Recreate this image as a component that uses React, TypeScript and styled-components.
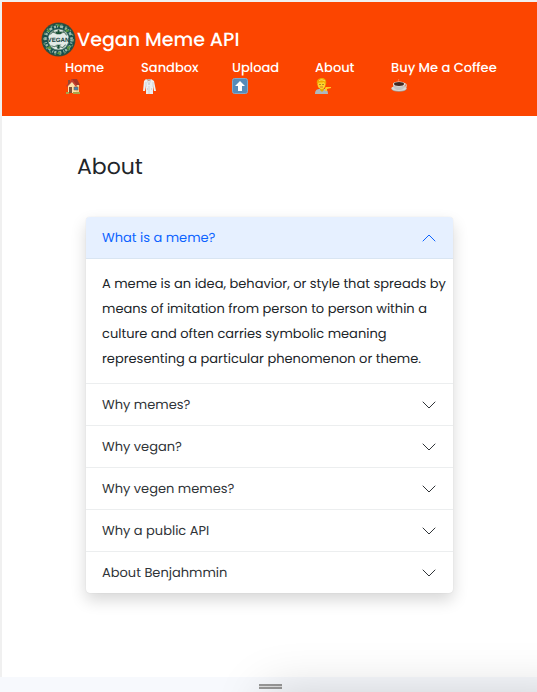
import React, { useState } from "react";
import styled, { createGlobalStyle } from "styled-components";

const GlobalStyle = createGlobalStyle`
  *, *::before, *::after { box-sizing: border-box; }
  body {
    margin: 0;
    background: #fff;
    color: #212529;
    font-family: Poppins, Inter, "Open Sans", sans-serif;
    font-size: 13px;
    text-rendering: geometricPrecision;
  }
`;

const Page = styled.div`
  display: flex;
  flex-direction: column;
  min-height: 100vh;
  overflow: hidden;
`;

const Viewport = styled.div`
  flex: 1;
  border-top: 2px solid #f0f0f0;
  border-left: 2px solid #f0f0f0;
`;

const Header = styled.header`
  padding: 20px 36px 18px 39px;
  background: #fc4500;
  color: #fff;
`;

const Brand = styled.a`
  display: flex;
  align-items: center;
  gap: 1px;
  height: 35px;
  color: inherit;
  font-size: 19px;
  font-weight: 500;
  line-height: 35px;
  text-decoration: none;
`;

const Nav = styled.nav`
  display: grid;
  grid-template-columns: 40px 55px 47px 40px max-content;
  column-gap: 36px;
  padding: 1px 0 0 24px;
  height: 41px;
`;

const NavLink = styled.a`
  display: flex;
  flex-direction: column;
  color: inherit;
  font-weight: 500;
  line-height: 20px;
  text-decoration: none;
  white-space: nowrap;
`;

const Main = styled.main`
  padding: 35px 84px 80px;
`;

const Title = styled.h1`
  margin: 0 0 34px -9px;
  font-size: 22px;
  font-weight: 400;
  line-height: 32px;
`;

const Accordion = styled.div`
  border-radius: 4px;
  background: #fff;
  box-shadow: 0 7px 16px rgba(0, 0, 0, 0.16), 0 0 1px rgba(0, 0, 0, 0.16);
`;

const Item = styled.section`
  border-bottom: 1px solid #eceeef;
  &:last-child { border-bottom: 0; }
`;

const ItemHeading = styled.h2`
  margin: 0;
  font-size: 13px;
  font-weight: 400;
`;

const Toggle = styled.button<{ $open: boolean }>`
  display: flex;
  align-items: center;
  justify-content: space-between;
  width: 100%;
  height: ${(p) => (p.$open ? 42 : 41)}px;
  padding: 0 17px 0 16px;
  border: 0;
  border-radius: ${(p) => (p.$open ? "4px 4px 0 0" : "4px")};
  background: ${(p) => (p.$open ? "#e6f0ff" : "transparent")};
  box-shadow: ${(p) => (p.$open ? "inset 0 -1px #d9e5f2" : "none")};
  color: ${(p) => (p.$open ? "#0c63ff" : "#303438")};
  font: inherit;
  text-align: left;
  text-rendering: inherit;
  cursor: pointer;
  svg { transform: ${(p) => (p.$open ? "rotate(180deg)" : "none")}; }
`;

const Panel = styled.p`
  margin: 0;
  padding: 12px 4px 12px 16px;
  line-height: 25px;
`;

const ResizeBar = styled.footer`
  position: relative;
  display: flex;
  justify-content: center;
  height: 15px;
  padding: 7px 0 0 4px;
  background: #f7f9fd;
  &::after {
    content: "";
    position: absolute;
    top: 18px;
    right: -40px;
    left: 50%;
    height: 60px;
    box-shadow: 0 0 50px 4px rgba(0, 0, 0, 0.17);
    pointer-events: none;
  }
`;

const Grip = styled.span`
  width: 23px;
  height: 5px;
  border: solid #999;
  border-width: 2px 0;
  background: #e0e0e0;
`;

const Logo = () => (
  <svg width="35" height="35" viewBox="0 0 34 34" aria-hidden="true">
    <circle cx="17" cy="17" r="16.5" fill="#3d4e38" />
    <circle cx="17" cy="17" r="15.5" fill="#174f4c" />
    <circle cx="17" cy="17" r="12.7" fill="none" stroke="#9eb8ab" strokeWidth="2.5" strokeDasharray="2 1 1 2 3 2" />
    <circle cx="17" cy="17" r="14.5" fill="none" stroke="#6e9b72" strokeWidth="1" strokeDasharray="2 3" />
    <circle cx="17" cy="17" r="10.5" fill="#5c8478" />
    <circle cx="17" cy="17" r="9.8" fill="#e4ebe6" />
    <path d="M9 12l3-3 2 2 3-3 3 3 2-2 3 4M10 23l3 1 2-1 1 2 3-1 2 1 3-3" fill="none" stroke="#638272" strokeWidth="1" />
    <path d="M14 9l2 1 1-3 1 3 3-1-2 3h-4zM15 22h5l-2 1v3h-2v-3z" fill="#174f35" />
    <text x="17" y="19" textAnchor="middle" fontSize="6" fontWeight="700" fontFamily="Liberation Sans, sans-serif" fill="#153f3b">VEGAN</text>
    <path d="M5 9l3-2 1 3zM24 6l4 3-4 1zM5 25l4-2 1 4zM25 24l4-1-3 5zM15 3l3-1v3zM15 30l4-1-1 3z" fill="#5b963f" />
  </svg>
);

const icons: Record<string, React.ReactNode> = {
  home: (
    <>
      <path d="M3 7h11v8H3z" fill="#f0d39a" />
      <path d="M3 7l4-4 4 4v8H3z" fill="#ffe2aa" />
      <path d="M6 1h6l3 6h-4z" fill="#a73524" />
      <path d="M1 8l6-7 5 7-1 1-4-5-5 5z" fill="#c54030" />
      <path d="M3 2h2v3L3 7z" fill="#8e4b38" />
      <path d="M4 9h3v6H4z" fill="#815039" />
      <path d="M9 9h4v3H9z" fill="#4184b4" stroke="#8b6041" strokeWidth=".6" />
      <path d="M1 14h3v2H1zM8 14h7v2H8z" fill="#a9a448" />
    </>
  ),
  coat: (
    <>
      <path d="M5 1L3 3 2 13h2l1-5v8h7V8l1 5h2L13 3l-3-2-2 2z" fill="#eceeef" />
      <path d="M6 1l2 6 2-6M8 8v8M5 4v5M12 4v5" fill="none" stroke="#bdc5c9" strokeWidth=".6" />
      <path d="M6 11h1M10 11h1" stroke="#9ba4a8" strokeWidth=".6" />
      <path d="M6 1h4L8 3z" fill="#a9b5b8" />
    </>
  ),
  upload: (
    <>
      <rect x=".5" y=".5" width="15" height="15" rx="2" fill="#568bb9" stroke="#82a8c8" />
      <path d="M8 3l5 5h-3v5H6V8H3z" fill="#fff" />
    </>
  ),
  person: (
    <>
      <path d="M0 16c0-4 2-5 5-5h4c3 0 4 2 4 5z" fill="#aeb8bd" />
      <path d="M5 9h4v3l-2 2-2-2z" fill="#e5a900" />
      <ellipse cx="6.5" cy="6.3" rx="4" ry="5" fill="#ffd22c" />
      <path d="M2 6c-1-4 2-6 5-6s5 2 4 7L9 4C7 5 4 4 3 5z" fill="#f0a900" />
      <path d="M4 3c2-2 4-1 6 0" stroke="#ffe774" fill="none" />
      <path d="M5 6v1M8 6v1" stroke="#654719" />
      <path d="M5 9h3" stroke="#bd572b" strokeWidth=".7" />
      <path d="M10 10l1-1h5v1l-4 1v2h-2z" fill="#ffc928" />
    </>
  ),
  coffee: (
    <>
      <ellipse cx="8" cy="11" rx="7.5" ry="2.7" fill="#9e9b97" />
      <ellipse cx="8" cy="10.3" rx="7.7" ry="2.7" fill="#dad8d5" />
      <circle cx="13.2" cy="7.5" r="2" fill="none" stroke="#d3ceca" strokeWidth="1.2" />
      <path d="M2 6h12c0 4-2 6-6 6S2 10 2 6z" fill="#c5c4c2" />
      <ellipse cx="8" cy="6" rx="6" ry="2.5" fill="#ebe6df" />
      <ellipse cx="8" cy="6" rx="5" ry="1.9" fill="#412820" />
      <path d="M7 4c2-1-1-1 1-3" fill="none" stroke="#ff987a" strokeWidth=".6" />
    </>
  ),
};

const Pictogram = ({ name }: { name: string }) => (
  <svg width="16" height="16" viewBox="0 0 16 16" aria-hidden="true">{icons[name]}</svg>
);

const Chevron = () => (
  <svg width="14" height="14" viewBox="0 0 14 14" fill="none" stroke="currentColor" strokeLinecap="round" strokeLinejoin="round" aria-hidden="true">
    <path d="M1 4l6 6 6-6" />
  </svg>
);

const links = [
  ["Home", "home"],
  ["Sandbox", "coat"],
  ["Upload", "upload"],
  ["About", "person"],
  ["Buy Me a Coffee", "coffee"],
];

const questions = [
  "What is a meme?",
  "Why memes?",
  "Why vegan?",
  "Why vegen memes?",
  "Why a public API",
  "About Benjahmmin",
];

const definition =
  "A meme is an idea, behavior, or style that spreads by means of imitation from person to person within a culture and often carries symbolic meaning representing a particular phenomenon or theme.";

export default function App() {
  const [open, setOpen] = useState(0);
  return (
    <Page>
      <GlobalStyle />
      <Viewport>
        <Header>
          <Brand href="#home"><Logo />Vegan Meme API</Brand>
          <Nav aria-label="Main">
            {links.map(([label, icon]) => (
              <NavLink key={label} href={`#${icon}`}>{label}<Pictogram name={icon} /></NavLink>
            ))}
          </Nav>
        </Header>
        <Main>
          <Title>About</Title>
          <Accordion>
            {questions.map((question, i) => (
              <Item key={question}>
                <ItemHeading>
                  <Toggle
                    type="button"
                    $open={open === i}
                    aria-expanded={open === i}
                    aria-controls={`answer-${i}`}
                    onClick={() => setOpen(open === i ? -1 : i)}
                  >
                    {question}<Chevron />
                  </Toggle>
                </ItemHeading>
                <Panel id={`answer-${i}`} hidden={open !== i}>{i === 0 ? definition : null}</Panel>
              </Item>
            ))}
          </Accordion>
        </Main>
      </Viewport>
      <ResizeBar><Grip /></ResizeBar>
    </Page>
  );
}
